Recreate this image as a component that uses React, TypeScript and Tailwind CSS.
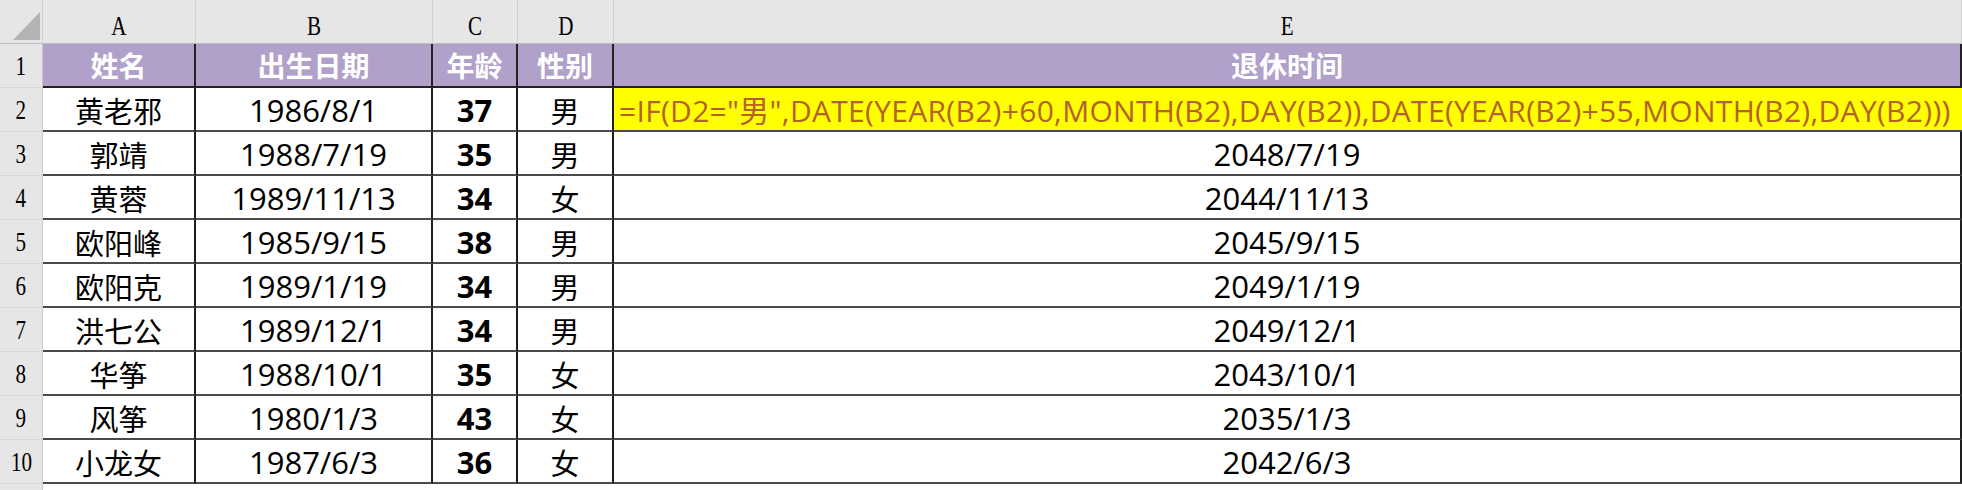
import React from "react";

const rows: [string, string, string, string, string | null][] = [
  ["黄老邪", "1986/8/1", "37", "男", null],
  ["郭靖", "1988/7/19", "35", "男", "2048/7/19"],
  ["黄蓉", "1989/11/13", "34", "女", "2044/11/13"],
  ["欧阳峰", "1985/9/15", "38", "男", "2045/9/15"],
  ["欧阳克", "1989/1/19", "34", "男", "2049/1/19"],
  ["洪七公", "1989/12/1", "34", "男", "2049/12/1"],
  ["华筝", "1988/10/1", "35", "女", "2043/10/1"],
  ["风筝", "1980/1/3", "43", "女", "2035/1/3"],
  ["小龙女", "1987/6/3", "36", "女", "2042/6/3"],
];

const formula =
  '=IF(D2="男",DATE(YEAR(B2)+60,MONTH(B2),DAY(B2)),DATE(YEAR(B2)+55,MONTH(B2),DAY(B2)))';

const hdr =
  "bg-[#e6e6e6] border-r border-b border-r-[#d0d0d0] border-b-[#b9bcc6] flex items-end justify-center pb-[3px] text-[27px] leading-none text-black font-['Liberation_Serif',serif]";
const rowHdr =
  "bg-[#e6e6e6] border-r border-b border-r-[#c8c8c8] border-b-[#d6d6d6] flex items-center justify-center text-[27px] leading-none text-black font-['Liberation_Serif',serif]";
const purple =
  "bg-[#b0a0ca] border-r-2 border-b-2 border-[#222] flex items-center justify-center text-white font-bold text-[28px] leading-none font-['Noto_Sans_CJK_SC',sans-serif]";
const cell =
  "bg-white border-r-2 border-b-2 border-r-[#1e1e1e] border-b-[#4a4a4a] flex items-center justify-center text-black leading-none pt-[3px]";
const latin = "font-['Open_Sans','Noto_Sans_CJK_SC',sans-serif] text-[31px]";
const cjk = "font-['Noto_Sans_CJK_SC',sans-serif] text-[29px]";

export default function App() {
  return (
    <div className="w-[1962px] h-[490px] overflow-hidden bg-white">
      <div className="grid grid-cols-[43px_153px_237px_85px_96px_1fr] grid-rows-[44px_repeat(10,44px)_20px]">
        {/* column letters */}
        <div className="bg-[#e6e6e6] border-r border-b border-r-[#d0d0d0] border-b-[#b9bcc6] relative">
          <svg className="absolute left-[13px] top-[12px]" width="27" height="28" viewBox="0 0 27 28">
            <polygon points="27,0 27,28 0,28" fill="#b4b4b4" />
          </svg>
        </div>
        {["A", "B", "C", "D", "E"].map((l) => (
          <div key={l} className={hdr}>
            <span className="inline-block scale-x-[0.78]">{l}</span>
          </div>
        ))}

        {/* header row 1 */}
        <div className={rowHdr}>
          <span className="inline-block scale-x-[0.78] pt-[2px]">1</span>
        </div>
        {["姓名", "出生日期", "年龄", "性别", "退休时间"].map((t) => (
          <div key={t} className={purple}>
            {t}
          </div>
        ))}

        {rows.map((r, i) => (
          <React.Fragment key={i}>
            <div className={rowHdr}>
              <span className="inline-block scale-x-[0.78] pt-[2px]">{i + 2}</span>
            </div>
            <div className={`${cell} ${cjk}`}>{r[0]}</div>
            <div className={`${cell} ${latin}`}>{r[1]}</div>
            <div className={`${cell} ${latin} font-bold`}>{r[2]}</div>
            <div className={`${cell} ${cjk}`}>{r[3]}</div>
            {r[4] === null ? (
              <div className="bg-[#ffff00] border-b-2 border-b-[#4a4a4a] flex items-center justify-start pl-[5px] pt-[3px] overflow-hidden whitespace-nowrap">
                <span className="inline-block text-[#b5622a] text-[30px] leading-none font-['Open_Sans','Noto_Sans_CJK_SC',sans-serif] tracking-[0.3px]">
                  {formula}
                </span>
              </div>
            ) : (
              <div className={`${cell} ${latin} border-r-0`}>{r[4]}</div>
            )}
          </React.Fragment>
        ))}

        {/* partial row 11 */}
        <div className="bg-[#e6e6e6] border-r border-r-[#c8c8c8]" />
        <div className="col-span-5 bg-white" />
      </div>
    </div>
  );
}
